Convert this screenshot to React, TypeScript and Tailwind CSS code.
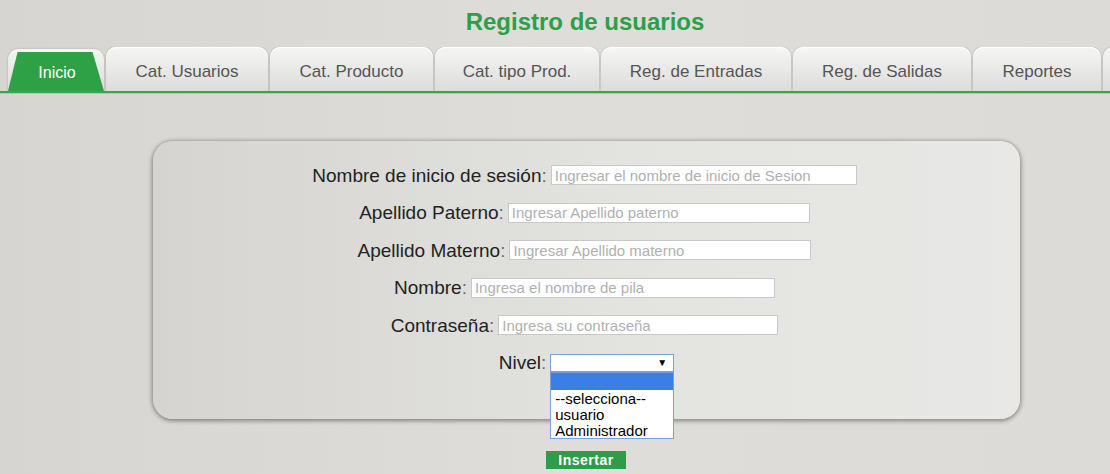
import { useState } from "react";

const tabs = [
  { label: "Cat. Usuarios", w: "w-[162px]" },
  { label: "Cat. Producto", w: "w-[163px]" },
  { label: "Cat. tipo Prod.", w: "w-[164px]" },
  { label: "Reg. de Entradas", w: "w-[190px]" },
  { label: "Reg. de Salidas", w: "w-[178px]" },
  { label: "Reportes", w: "w-[128px]" },
];

const fields = [
  { label: "Nombre de inicio de sesión", placeholder: "Ingresar el nombre de inicio de Sesion", w: "w-[306px]" },
  { label: "Apellido Paterno", placeholder: "Ingresar Apellido paterno", w: "w-[302px]" },
  { label: "Apellido Materno", placeholder: "Ingresar Apellido materno", w: "w-[302px]" },
  { label: "Nombre", placeholder: "Ingresa el nombre de pila", w: "w-[304px]" },
  { label: "Contraseña", placeholder: "Ingresa su contraseña", w: "w-[280px]", type: "password" },
];

const niveles = ["--selecciona--", "usuario", "Administrador"];

export default function App() {
  const [open] = useState(true);

  return (
    <div className="h-[474px] w-full overflow-hidden bg-[linear-gradient(to_right,#d6d5d1,#dedddA_50%,#dcdbd7)] font-['Liberation_Sans',Arial,sans-serif] text-[#222]">
      {/* Title */}
      <h1 className="h-[47px] pl-[60px] pt-[8px] text-center text-[24px] font-bold leading-[28px] text-[#2f9e48]">
        Registro de usuarios
      </h1>

      {/* Tabs */}
      <nav className="flex h-[46px] items-end gap-[2px] overflow-hidden border-b-2 border-[#3aa550] pl-[8px] shadow-[0_1px_0_#9fd3a8]">
        <div className="relative h-[42px] w-[96px] shrink-0 rounded-t-[10px] bg-[linear-gradient(#f4f4f3,#dddcda)] shadow-[0_0_2px_rgba(0,0,0,0.25)]">
          <div className="absolute inset-x-0 bottom-0 top-[3px] flex items-center justify-center bg-[#2ea146] pl-[2px] pt-[3px] text-[16px] text-white [clip-path:polygon(10%_0,88%_0,100%_100%,0_100%)]">
            Inicio
          </div>
        </div>
        {tabs.map((t) => (
          <div
            key={t.label}
            className={`flex h-[44px] shrink-0 items-center justify-center rounded-t-[10px] bg-[linear-gradient(#f6f6f5,#dcdcda)] pt-[5px] text-[17px] text-[#555] shadow-[inset_0_1px_0_#fff,0_0_2px_rgba(0,0,0,0.3)] ${t.w}`}
          >
            {t.label}
          </div>
        ))}
        <div className="h-[44px] w-[40px] shrink-0 rounded-t-[10px] bg-[linear-gradient(#f6f6f5,#dcdcda)] shadow-[0_0_2px_rgba(0,0,0,0.3)]" />
      </nav>

      {/* Form panel */}
      <section className="ml-[153px] mt-[48px] flex h-[278px] w-[867px] flex-col items-center gap-[17.5px] rounded-[20px] bg-[linear-gradient(to_right,#d5d4d0,#e3e3e0_55%,#e8e8e6)] pr-[4px] pt-[24px] shadow-[0_1px_4px_1px_rgba(0,0,0,0.4)]">
        {fields.map((f) => (
          <div key={f.label} className="flex h-[20px] items-center gap-[4px]">
            <label className="text-[19px] leading-none text-[#222]">
              {f.label}
              <span className="text-[#6b6b6b]">:</span>
            </label>
            <input
              type={f.type ?? "text"}
              placeholder={f.placeholder}
              className={`h-[20px] border border-[#c8c8c8] bg-white px-[3px] text-[15px] leading-none placeholder:text-[#b0b0b0] ${f.w}`}
            />
          </div>
        ))}
        <div className="flex h-[20px] items-center gap-[4px] pl-[4px]">
          <label className="text-[19px] leading-none text-[#222]">
            Nivel<span className="text-[#6b6b6b]">:</span>
          </label>
          <div className="relative">
            <div className="flex h-[18px] w-[124px] items-center justify-end border border-[#7b9fd6] bg-white pr-[6px] text-[10px] text-black">
              ▼
            </div>
            {open && (
              <ul className="absolute left-0 top-full z-10 w-[124px] border border-[#7b9fd6] bg-white text-[15px] leading-[15px] text-black">
                <li className="h-[17px] bg-[#3a7fe6]" />
                {niveles.map((n) => (
                  <li key={n} className="px-[4px] pt-[1px]">
                    {n}
                  </li>
                ))}
              </ul>
            )}
          </div>
        </div>
      </section>

      {/* Submit */}
      <div className="mt-[32px] flex justify-center pl-[62px]">
        <button className="h-[18px] w-[80px] bg-[#2e9c48] text-[14px] font-bold leading-none tracking-[0.5px] text-white">
          Insertar
        </button>
      </div>
    </div>
  );
}
